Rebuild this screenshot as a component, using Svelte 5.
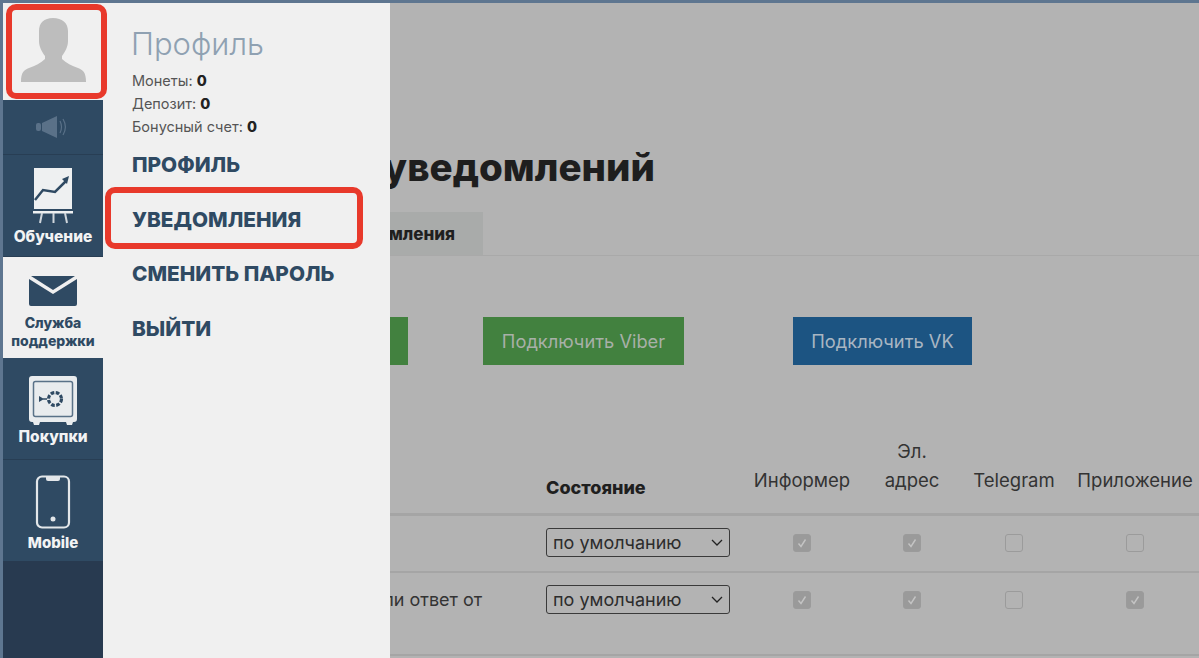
<script>
  const stats = [
    { label: 'Монеты:', value: 0 },
    { label: 'Депозит:', value: 0 },
    { label: 'Бонусный счет:', value: 0 }
  ];
  const links = ['Профиль', 'Уведомления', 'Сменить пароль', 'Выйти'];
  const rows = [
    { text: 'Новые сообщения', flags: [true, true, false, false] },
    { text: 'Получен комментарий или ответ от пользователя', flags: [true, true, false, true] }
  ];
</script>

<div class="frame">
  <main class="main">
    <div class="content">
      <h1>Настройка уведомлений</h1>
      <div class="tabs"><div class="tab">Уведомления</div></div>
      <div class="connect">
        <button class="btn green first">Подключить Telegram</button>
        <button class="btn green viber">Подключить Viber</button>
        <button class="btn blue">Подключить VK</button>
      </div>
      <div class="table">
        <div class="row head">
          <div class="c-name"></div>
          <div class="c-state">Состояние</div>
          <div class="c-flag">Информер</div>
          <div class="c-flag">Эл.<br />адрес</div>
          <div class="c-flag">Telegram</div>
          <div class="c-flag">Приложение</div>
        </div>
        {#each rows as row}
          <div class="row item">
            <div class="c-name">{row.text}</div>
            <div class="c-state">
              <div class="select">по умолчанию
                <svg width="12" height="7" viewBox="0 0 12 7"><path d="M1 1l5 5 5-5" fill="none" stroke="#222" stroke-width="1.3" /></svg>
              </div>
            </div>
            {#each row.flags as flag}
              <div class="c-flag">
                <span class="check" class:on={flag}>
                  {#if flag}
                    <svg width="12" height="12" viewBox="0 0 12 12"><path d="M2.5 6.5l2.5 3 4.5-7" fill="none" stroke="#c4c4c4" stroke-width="1.4" /></svg>
                  {/if}
                </span>
              </div>
            {/each}
          </div>
        {/each}
      </div>
    </div>
  </main>

  <nav class="rail">
    <div class="avatar">
      <svg width="65" height="64" viewBox="0 0 65 64">
        <path d="M32 0c-9 0-14 5-14 13v10c0 6 3 11 6 15v3c-4 4-10 7-16 9-5 2-8 4-8 14h65c0-10-3-12-8-14-6-2-12-5-16-9v-3c3-4 6-9 6-15V13C47 5 41 0 32 0z" fill="#bdbdbd" />
      </svg>
    </div>
    <div class="rail-item sound">
      <svg width="34" height="22" viewBox="0 0 34 22">
        <rect x="0" y="7" width="5" height="8" rx="2" fill="#5a7188" />
        <path d="M6 7l15-7v22L6 15z" fill="#5a7188" />
        <path d="M24 5c2 4 2 8 0 12M27 3c3 5 3 11 0 16" fill="none" stroke="#5a7188" stroke-width="1.2" />
      </svg>
    </div>
    <div class="rail-item learn">
      <svg width="40" height="57" viewBox="0 0 40 57">
        <rect x="1" y="1" width="38" height="41" fill="#eef0f1" />
        <path d="M2 33l8-10 12 2 11-11" fill="none" stroke="#2f4a63" stroke-width="2.500" />
        <path d="M29 12l7-3-2 8z" fill="#2f4a63" />
        <rect x="0" y="44" width="40" height="2.500" fill="#eef0f1" />
        <path d="M9 46l-2 10M20.500 46v10M32 46l2 10" stroke="#cfd6dc" stroke-width="2" fill="none" />
      </svg>
      <span>Обучение</span>
    </div>
    <div class="rail-item support">
      <svg width="50" height="30" viewBox="0 0 50 30">
        <path d="M1 3l24 15L49 3v25a2 2 0 0 1-2 2H3a2 2 0 0 1-2-2z" fill="#2f4a63" />
        <path d="M3 0h44L25 14z" fill="#2f4a63" />
      </svg>
      <span>Служба поддержки</span>
    </div>
    <div class="rail-item shop">
      <svg width="50" height="50" viewBox="0 0 50 50">
        <path d="M4 0h42a3 3 0 0 1 3 3v40a3 3 0 0 1-3 3h-1l-1 3h-5l-1-3H12l-1 3H6l-1-3H4a3 3 0 0 1-3-3V3a3 3 0 0 1 3-3z" fill="#e9ecee" />
        <rect x="5.500" y="5.500" width="39" height="35" rx="2" fill="none" stroke="#5a7288" stroke-width="1.500" />
        <circle cx="27" cy="23" r="6.500" fill="none" stroke="#2f4a63" stroke-width="3.200" stroke-dasharray="3.600 1.500" />
        <path d="M11 20l5 3-5 3zM15 22.200h4v1.600h-4z" fill="#2f4a63" />
      </svg>
      <span>Покупки</span>
    </div>
    <div class="rail-item phone">
      <svg width="36" height="54" viewBox="0 0 36 54">
        <path d="M7 1.500h22a5 5 0 0 1 5 5v41a5 5 0 0 1-5 5H7a5 5 0 0 1-5-5v-41a5 5 0 0 1 5-5z" fill="none" stroke="#e3e7ea" stroke-width="2.200" />
        <path d="M11 2h14v2a2 2 0 0 1-2 2H13a2 2 0 0 1-2-2z" fill="#e3e7ea" />
        <circle cx="18" cy="44" r="2.500" fill="#e3e7ea" />
      </svg>
      <span>Mobile</span>
    </div>
  </nav>

  <aside class="panel">
    <h2>Профиль</h2>
    <ul class="stats">
      {#each stats as s}
        <li>{s.label} <b>{s.value}</b></li>
      {/each}
    </ul>
    <ul class="links">
      {#each links as link}
        <li>{link}</li>
      {/each}
    </ul>
  </aside>

  <div class="mark mark-avatar"></div>
  <div class="mark mark-link"></div>
</div>

<style>
  :global(body) {
    margin: 0;
    background: #b3b3b3;
  }

  .frame {
    position: relative;
    display: flex;
    width: 1199px;
    height: 658px;
    box-sizing: border-box;
    overflow: hidden;
    border-top: 3px solid #5e7690;
    border-left: 3px solid #5e7690;
    font-family: Inter, "Open Sans", sans-serif;
  }

  /* Navigation rail */
  .rail {
    order: 1;
    flex: 0 0 100px;
    display: flex;
    flex-direction: column;
    background: #283a50;
  }

  .avatar {
    height: 97px;
    background: #f0f0f0;
    display: flex;
    justify-content: center;
    padding-top: 15px;
    box-sizing: border-box;
  }

  .rail-item {
    display: flex;
    flex-direction: column;
    align-items: center;
    box-sizing: border-box;
    background: #2f4a63;
    border-bottom: 1px solid #283e54;
    color: #f2f3f4;
    font-size: 15.5px;
    font-weight: 800;
    line-height: 18px;
    text-align: center;
  }

  .sound { height: 55px; justify-content: center; }
  .learn { height: 102px; padding-top: 12px; gap: 4px; }
  .support {
    height: 101px;
    padding-top: 19px;
    gap: 8px;
    font-size: 14px;
    background: #f0f0f0;
    color: #2f4a63;
    border-bottom: 0;
  }
  .shop { height: 102px; padding-top: 18px; gap: 2px; }
  .phone { height: 101px; padding-top: 15px; gap: 5px; border-bottom: 0; }
  .phone span { font-size: 15px; }

  /* Profile flyout */
  .panel {
    order: 2;
    flex: 0 0 287px;
    box-sizing: border-box;
    padding: 24px 0 0 29px;
    background: #f0f0f0;
  }

  h2 {
    margin: 0 0 8px -1px;
    font-size: 31px;
    font-weight: 300;
    line-height: 34px;
    color: #8fa1b2;
  }

  .stats, .links {
    margin: 0;
    padding: 0;
    list-style: none;
  }

  .stats li {
    font-size: 14.5px;
    line-height: 23px;
    color: #555;
  }

  .stats b { color: #222; font-weight: 800; }

  .links { margin-top: 9px; }

  .links li {
    height: 54.500px;
    line-height: 36px;
    font-size: 20.8px;
    font-weight: 800;
    text-transform: uppercase;
    color: #2f4a63;
  }

  /* Dimmed page behind the flyout */
  .main {
    order: 3;
    flex: 1;
    overflow: hidden;
    min-width: 0;
  }

  .content {
    width: 1050px;
    margin-left: -240px;
    color: #1f1f1f;
  }

  h1 {
    margin: 141px 0 0;
    font-size: 38.5px;
    font-weight: 800;
    line-height: 46px;
    text-align: right;
    width: 505px;
    white-space: nowrap;
    color: #1e1e1e;
  }

  .tabs {
    margin-top: 22px;
    height: 43px;
    display: flex;
    justify-content: flex-end;
    width: 1050px;
    border-bottom: 1px solid #a9a9a9;
  }

  .tab {
    margin-right: 717px;
    width: 190px;
    padding-right: 28px;
    box-sizing: border-box;
    background: #a9abaa;
    text-align: right;
    font-size: 17px;
    font-weight: 800;
    line-height: 44px;
    white-space: nowrap;
    overflow: hidden;
  }

  .connect {
    display: flex;
    margin-top: 61px;
  }

  .btn {
    height: 48px;
    padding: 0;
    border: 0;
    font: inherit;
    font-size: 18.3px;
    color: #a8b0a8;
  }

  .green { background: #42813f; }
  .blue { background: #1c5482; width: 179px; margin-left: 109px; color: #a9b6c2; }
  .first { width: 258px; }
  .viber { width: 201px; margin-left: 75px; }

  .table {
    margin-top: 58px;
    width: 1100px;
  }

  .row {
    display: grid;
    grid-template-columns: 396px 198px 116px 104px 100px 142px;
    align-items: center;
  }

  .head {
    align-items: end;
    height: 90px;
    border-bottom: 3px solid #a5a5a5;
    font-size: 18.5px;
    line-height: 29px;
    color: #333;
  }

  .head .c-state {
    font-weight: 800;
    font-size: 18px;
    color: #1f1f1f;
    padding-bottom: 11px;
  }

  .head .c-flag { padding-bottom: 18px; }

  .item {
    align-items: start;
    border-bottom: 2px solid #a5a5a5;
    padding-top: 12px;
    font-size: 18px;
    line-height: 29px;
    color: #333;
    min-height: 43px;
  }

  .item + .item { padding-bottom: 11px; }

  .item .c-name { padding-left: 17px; }

  .c-flag { text-align: center; white-space: nowrap; }

  .select {
    display: flex;
    align-items: center;
    justify-content: space-between;
    width: 184px;
    height: 29px;
    box-sizing: border-box;
    padding: 0 6px;
    border: 1px solid #3a3a3a;
    border-radius: 3px;
    font-size: 18px;
    color: #2c2c2c;
  }

  .check {
    display: inline-block;
    width: 18px;
    height: 18px;
    margin-top: 6px;
    box-sizing: border-box;
    border: 1px solid #9b9b9b;
    border-radius: 3px;
  }

  .check.on {
    background: #9a9a9a;
    display: inline-flex;
    align-items: center;
    justify-content: center;
  }

  /* Red annotation boxes drawn over the screenshot */
  .mark {
    position: absolute;
    box-sizing: border-box;
    border: 6px solid #e8392b;
    border-radius: 10px;
  }

  .mark-avatar { left: 3px; top: 1px; width: 101px; height: 95px; }
  .mark-link { left: 102px; top: 184px; width: 258px; height: 62px; }
</style>
